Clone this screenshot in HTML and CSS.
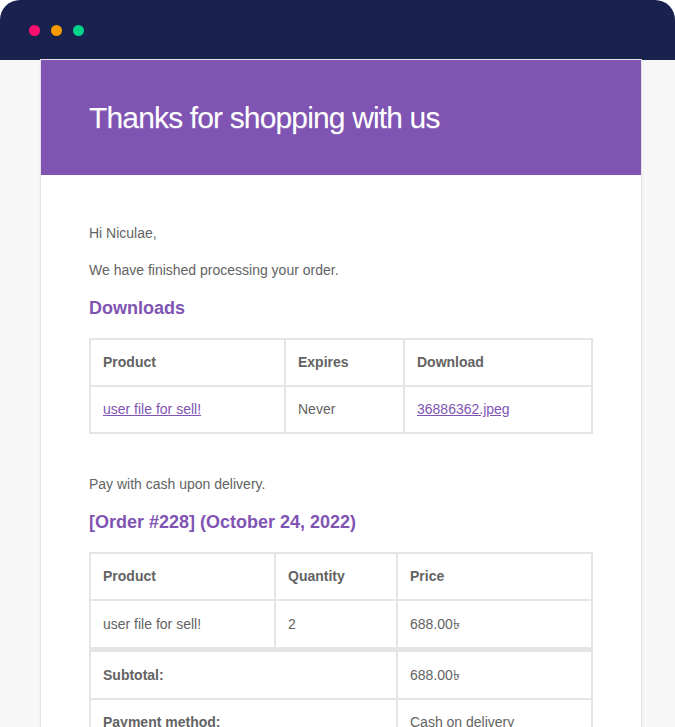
FILE: index.html
```html
<!DOCTYPE html>
<html lang="en">
<head>
<meta charset="utf-8">
<title>Thanks for shopping with us</title>
<link rel="stylesheet" href="styles.css">
</head>
<body>
<div class="frame">
  <div class="titlebar">
    <span class="dot dot-red"></span>
    <span class="dot dot-yellow"></span>
    <span class="dot dot-green"></span>
  </div>
  <div class="stage">
    <div class="email">
      <div class="email-header">
        <h1 class="email-title">Thanks for shopping with us</h1>
      </div>
      <div class="email-body">
        <p class="text">Hi Niculae,</p>
        <p class="text">We have finished processing your order.</p>
        <h2 class="section-title">Downloads</h2>
        <table class="data-table downloads" cellspacing="0">
          <thead>
            <tr>
              <th class="col-dl-product">Product</th>
              <th class="col-dl-expires">Expires</th>
              <th>Download</th>
            </tr>
          </thead>
          <tbody>
            <tr>
              <td><a class="link" href="#">user file for sell!</a></td>
              <td>Never</td>
              <td><a class="link" href="#">36886362.jpeg</a></td>
            </tr>
          </tbody>
        </table>
        <p class="text">Pay with cash upon delivery.</p>
        <h2 class="section-title">[Order #228] (October 24, 2022)</h2>
        <table class="data-table order" cellspacing="0">
          <thead>
            <tr>
              <th class="col-or-product">Product</th>
              <th class="col-or-qty">Quantity</th>
              <th>Price</th>
            </tr>
          </thead>
          <tbody>
            <tr>
              <td>user file for sell!</td>
              <td>2</td>
              <td>688.00<span class="cur">&#2547;</span></td>
            </tr>
          </tbody>
          <tfoot>
            <tr class="first-total">
              <th colspan="2">Subtotal:</th>
              <td>688.00<span class="cur">&#2547;</span></td>
            </tr>
            <tr>
              <th colspan="2">Payment method:</th>
              <td>Cash on delivery</td>
            </tr>
            <tr>
              <th colspan="2">Total:</th>
              <td>688.00<span class="cur">&#2547;</span></td>
            </tr>
          </tfoot>
        </table>
      </div>
    </div>
  </div>
</div>
</body>
</html>
```

FILE: styles.css
```css
html, body {
  margin: 0;
  padding: 0;
  background: #ffffff;
}

body {
  font-family: "Liberation Sans", Arial, sans-serif;
  overflow: hidden;
  height: 727px;
}

.frame {
  background: #f7f7f7;
  border-radius: 20px 20px 0 0;
  overflow: hidden;
  height: 727px;
}

.titlebar {
  height: 60px;
  background: #19214f;
  display: flex;
  align-items: center;
  gap: 11px;
  padding-left: 29px;
  box-sizing: border-box;
}

.dot {
  width: 11px;
  height: 11px;
  border-radius: 50%;
  display: block;
}

.dot-red { background: #ff0f6e; }
.dot-yellow { background: #f79b00; }
.dot-green { background: #00d38a; }

.stage {
  padding-left: 41px;
}

.email {
  width: 600px;
  background: #ffffff;
  box-shadow: 0 0 0 1px #e4e4e4, 0 1px 4px rgba(0, 0, 0, 0.08);
}

.email-header {
  background: #7f54b3;
  padding: 35px 48px;
}

.email-title {
  margin: 0;
  font-family: "Liberation Sans", Arial, sans-serif;
  font-size: 30px;
  font-weight: 300;
  line-height: 45px;
  color: #ffffff;
  letter-spacing: -0.85px;
  text-shadow: 0 1px 0 #9976c2;
}

.email-body {
  padding: 48px;
  color: #636363;
}

.text {
  margin: 0 0 16px;
  font-size: 14px;
  line-height: 21px;
}

.section-title {
  margin: 0 0 18px;
  font-size: 18px;
  font-weight: bold;
  line-height: 23px;
  color: #7f54b3;
}

.section-title + .data-table {
  margin-top: 1px;
}

.data-table {
  width: 100%;
  border: 1px solid #e5e5e5;
  border-collapse: separate;
  border-spacing: 0;
  margin-bottom: 40px;
  color: #636363;
  font-size: 14px;
}

.data-table th,
.data-table td {
  border: 1px solid #e5e5e5;
  padding: 12px;
  text-align: left;
  line-height: 21px;
  vertical-align: middle;
}

.data-table th {
  font-weight: bold;
}

.cur {
  font-family: "Noto Sans", "DejaVu Sans", sans-serif;
}

.col-dl-product { width: 169px; }
.col-dl-expires { width: 93px; }

.col-or-product { width: 159px; }
.col-or-qty { width: 96px; }

.order .first-total th,
.order .first-total td {
  border-top-width: 4px;
}

.link {
  color: #7f54b3;
  text-decoration: underline;
}
```
